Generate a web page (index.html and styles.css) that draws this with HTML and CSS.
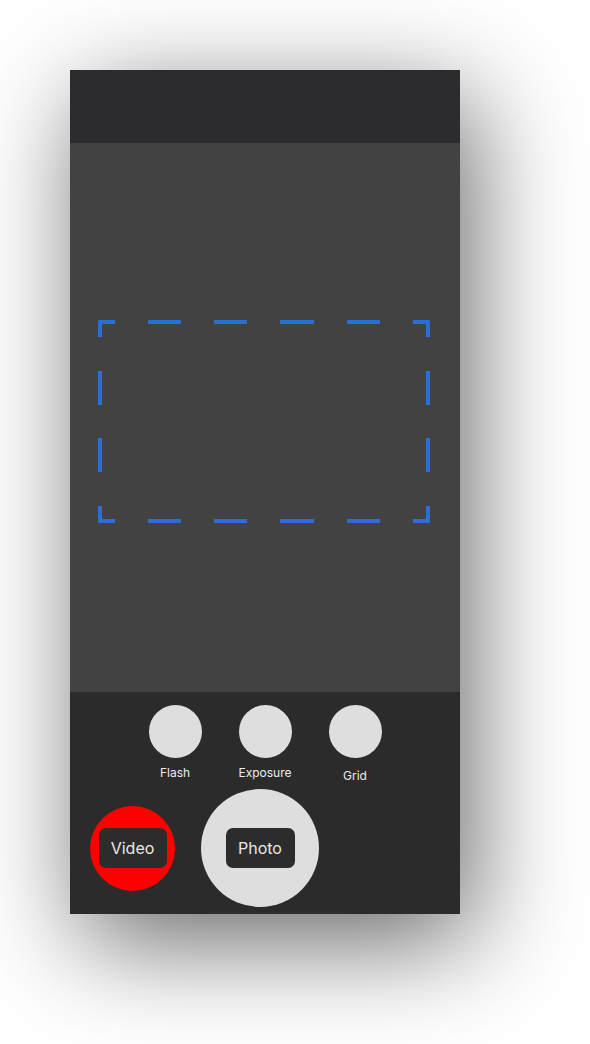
FILE: index.html
```html
<!DOCTYPE html>
<html lang="en">
<head>
<meta charset="utf-8">
<title>Camera</title>
<link rel="stylesheet" href="styles.css">
</head>
<body>
<div class="phone">
  <div class="topbar"></div>
  <div class="viewfinder">
    <svg class="focus" width="332" height="203" viewBox="0 0 332 203" fill="none" stroke="#2b6ed6" stroke-width="4" stroke-linecap="butt" stroke-linejoin="miter">
      <path d="M2 17V2H17M315 2H330V17M2 186V201H17M315 201H330V186"/>
      <path d="M50 2H83M116 2H149M182 2H216M249 2H282"/>
      <path d="M50 201H83M116 201H149M182 201H216M249 201H282"/>
      <path d="M2 51V85M2 118V152M330 51V85M330 118V152"/>
    </svg>
  </div>
  <div class="controls">
    <div class="options">
      <div class="option">
        <div class="dot"></div>
        <span class="label">Flash</span>
      </div>
      <div class="option">
        <div class="dot"></div>
        <span class="label">Exposure</span>
      </div>
      <div class="option">
        <div class="dot"></div>
        <span class="label label-low">Grid</span>
      </div>
    </div>
    <div class="modes">
      <div class="mode mode-video"><span class="tag">Video</span></div>
      <div class="mode mode-photo"><span class="tag">Photo</span></div>
    </div>
  </div>
</div>
</body>
</html>
```
FILE: styles.css
```css
html, body {
  margin: 0;
  padding: 0;
  background: #ffffff;
}
html {
  height: 100%;
}
body {
  box-sizing: border-box;
  min-height: 100vh;
  padding: 70px;
  font-family: Inter, "Liberation Sans", sans-serif;
  overflow: hidden;
}
.phone {
  width: 390px;
  height: 844px;
  display: flex;
  flex-direction: column;
  box-shadow: 12px 28px 100px rgba(0, 0, 0, 0.6);
}
.topbar {
  height: 73px;
  background: #2c2c2e;
}
.viewfinder {
  height: 549px;
  background: #424242;
  box-sizing: border-box;
  padding: 177px 0 0 28px;
}
.focus {
  display: block;
}
.controls {
  flex: 1;
  background: #2b2b2b;
  box-sizing: border-box;
  padding-top: 13px;
  display: flex;
  flex-direction: column;
}
.options {
  display: flex;
  justify-content: center;
  align-items: flex-start;
  gap: 37px;
}
.option {
  width: 53px;
  display: flex;
  flex-direction: column;
  align-items: center;
}
.dot {
  width: 53px;
  height: 53px;
  border-radius: 50%;
  background: #dedede;
}
.label {
  margin-top: 7px;
  font-size: 12px;
  line-height: 15px;
  color: #ececec;
  white-space: nowrap;
}
.label-low {
  margin-top: 10px;
}
.modes {
  margin-top: 6px;
  padding-left: 20px;
  display: flex;
  align-items: center;
  gap: 26px;
}
.mode {
  border-radius: 50%;
  display: flex;
  align-items: center;
  justify-content: center;
}
.mode-video {
  width: 85px;
  height: 85px;
  background: #ff0000;
}
.mode-photo {
  width: 118px;
  height: 118px;
  background: #dedede;
}
.tag {
  width: 68px;
  height: 40px;
  border-radius: 7px;
  background: #2c2c2c;
  color: #e8e8e8;
  font-size: 16px;
  display: flex;
  align-items: center;
  justify-content: center;
}
.mode-photo .tag {
  width: 69px;
}
```
